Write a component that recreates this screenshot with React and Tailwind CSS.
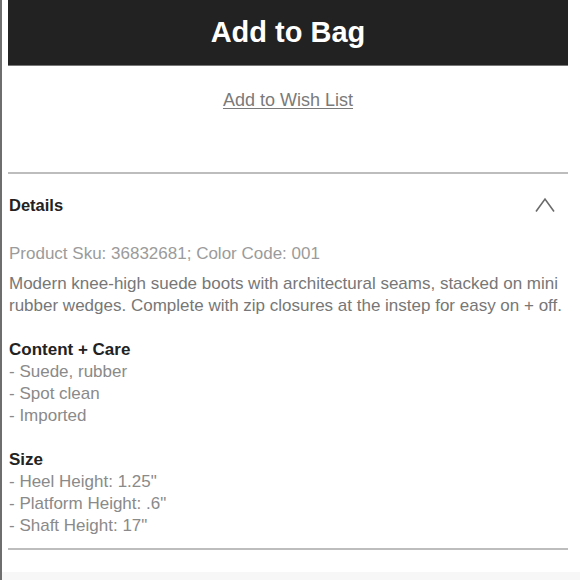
export default function App() {
  return (
    <div className="w-[580px] h-[580px] overflow-hidden bg-white flex flex-col border-l-2 border-[#6e6e6e]">
      <div className="flex-1 flex flex-col pl-[6px] pr-[12px] font-['Liberation_Sans',Arial,sans-serif]">
        <button className="h-[66px] w-full bg-[#222222] text-white text-[29px] font-bold flex items-center justify-center leading-none border-b border-[#777]">
          Add to Bag
        </button>
        <div className="mt-[24px] h-[20px] flex items-center justify-center">
          <a className="text-[18px] leading-[20px] text-[#7a7a7a] underline underline-offset-2 decoration-1">Add to Wish List</a>
        </div>
        <div className="mt-[62px] h-[2px] bg-[#bdbdbd]" />
        <div className="mt-[21px] flex items-center justify-between pl-[1px]">
          <span className="text-[16.5px] leading-[20px] font-bold text-[#222]">Details</span>
          <svg width="22" height="16" viewBox="0 0 22 16" className="mr-[12px]" fill="none">
            <path d="M2 14.5 L11 2 L20 14.5" stroke="#6a6a6a" strokeWidth="1.6" />
          </svg>
        </div>
        <div className="mt-[29px] pl-[1px] text-[17px] leading-[20px] text-[#9b9b9b]">
          Product Sku: 36832681; Color Code: 001
        </div>
        <p className="mt-[9px] pl-[1px] text-[17px] leading-[22px] text-[#777]">
          Modern knee-high suede boots with architectural seams, stacked on mini rubber wedges. Complete with zip closures at the instep for easy on + off.
        </p>
        <div className="mt-[22px] pl-[1px] text-[17px] leading-[22px]">
          <div className="font-bold text-[#222]">Content + Care</div>
          <div className="text-[#8a8a8a]">- Suede, rubber</div>
          <div className="text-[#8a8a8a]">- Spot clean</div>
          <div className="text-[#8a8a8a]">- Imported</div>
          <div className="mt-[22px] font-bold text-[#222]">Size</div>
          <div className="text-[#8a8a8a]">- Heel Height: 1.25"</div>
          <div className="text-[#8a8a8a]">- Platform Height: .6"</div>
          <div className="text-[#8a8a8a]">- Shaft Height: 17"</div>
        </div>
        <div className="mt-[11px] h-[2px] bg-[#bdbdbd]" />
      </div>
      <div className="h-[8px] bg-[#f7f7f7]" />
    </div>
  );
}
